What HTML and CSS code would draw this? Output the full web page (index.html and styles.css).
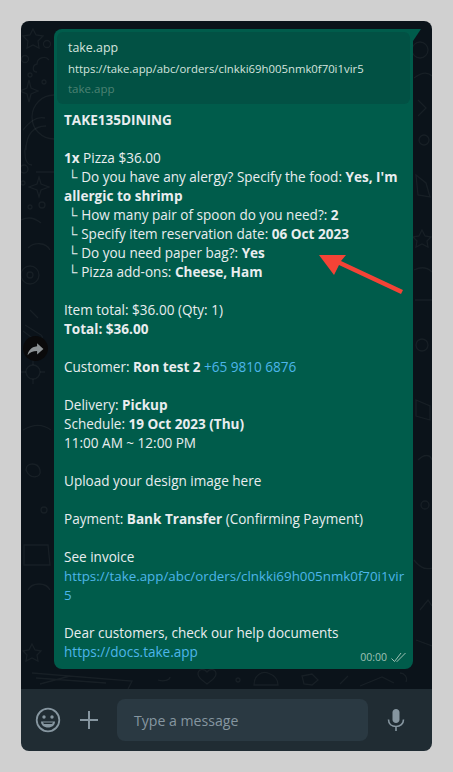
FILE: index.html
```html
<!DOCTYPE html>
<html lang="en">
<head>
    <meta charset="UTF-8">
    <meta name="viewport" content="width=device-width, initial-scale=1.0">
    <title>WhatsApp order message</title>
    <link rel="stylesheet" href="styles.css">
</head>
<body>
    <div class="chat-card">
        <div class="chat-area">
            <svg class="doodles" viewBox="21 21 411 668" fill="none" stroke="#fff" stroke-opacity="0.05" stroke-width="1.3">
                <path d="M33 29l3 6 7 1-5 5 1 7-6-3-6 3 1-7-5-5 7-1z"/>
                <circle cx="47" cy="44" r="3.5"/>
                <circle cx="25" cy="59" r="3.5"/>
                <path d="M37 72c-5 0-5-7 0-8 0-6 8-9 12-4"/>
                <circle cx="30" cy="75" r="2"/>
                <circle cx="44" cy="82" r="2"/>
                <path d="M29 80l2 8 7 3-7 3-2 8-2-8-7-3 7-3z"/>
                <circle cx="54" cy="117" r="22"/>
                <path d="M23 130c6-8 14-14 22-12M26 150c0-16 8-24 20-24M32 165c-8 0-8-14-6-20M36 172l18 0"/>
                <circle cx="24" cy="169" r="4"/>
                <circle cx="23" cy="183" r="2"/>
                <path d="M39 177l2 7 8 3-8 3-2 7-2-7-8-3 8-3z"/>
                <circle cx="42" cy="205" r="3"/>
                <circle cx="30" cy="207" r="2"/>
                <path d="M21 220c8-4 14-2 20 3M28 248c6-6 18-6 22 2"/>
                <circle cx="30" cy="275" r="9"/>
                <circle cx="30" cy="275" r="3"/>
                <path d="M30 310l8 8M25 325l16 10c4 3-2 8-6 5l-12-9"/>
                <circle cx="33" cy="372" r="7"/>
                <path d="M33 360v5M33 379v5M21 372h5M40 372h5"/>
                <path d="M23 430c10-6 20-6 28 0M26 470c0-8 12-8 14 0s-10 10-14 0z"/>
                <circle cx="44" cy="510" r="3"/>
                <path d="M24 545h24l2 20h-26zM28 590c4-8 18-8 22 0"/>
                <path d="M32 644l3 6 6 1-4 4 1 6-6-3-6 3 1-6-4-4 6-1z"/>
                <path d="M32 673l100 8-4 8M40 684l30-8M36 678l70 5"/>
                <path d="M158 680c6 2 12 0 12-3M207 684c-5-4-9-6-9-10 0-5 6-6 9-2 3-4 9-3 9 2 0 4-4 6-9 10z"/>
                <circle cx="238" cy="680" r="2"/>
                <path d="M254 685c0-10 8-14 14-12s10 6 10 12zM302 676l10-2 6 6-6 5-8-1zM340 684l8-8M360 686l22-9 12 6M400 673c4 0 8 4 6 9"/>
                <circle cx="420" cy="50" r="8"/>
                <path d="M414 78c8-6 14-6 18-2M418 100l8 8-8 8"/>
                <circle cx="424" cy="140" r="5"/>
                <path d="M416 175l10 8 4 14-12-2zM422 230l3 6 6 1-4 4 1 6-6-3-6 3 1-6-4-4 6-1z"/>
                <path d="M414 270c8-4 14-2 18 2M415 300h17"/>
                <circle cx="422" cy="345" r="6"/>
                <path d="M416 400l14 6v14l-14-4zM418 460c6-6 12-6 14 0"/>
                <circle cx="425" cy="505" r="4"/>
                <path d="M414 560c6 8 12 10 18 8M420 610l8-10 4 6M416 640l16 6"/>
            </svg>

            <button class="forward-btn" type="button" aria-label="Forward">
                <svg viewBox="0 0 24 24" width="19" height="19"><path fill="#8e9396" d="M14 5.5l8 7-8 7v-4.2c-5.500 0-9 1.600-12 5.200 1-5.500 4-10.300 12-11.300z"/></svg>
            </button>

            <div class="bubble">
                <svg class="bubble-tail" viewBox="0 0 8 12" width="8" height="12"><path fill="#005c4b" d="M0 0h8L0 12z"/></svg>

                <div class="link-preview">
                    <div class="preview-title">take.app</div>
                    <div class="preview-url">https://take.app/abc/orders/clnkki69h005nmk0f70i1vir5</div>
                    <div class="preview-site">take.app</div>
                </div>

                <div class="message">
                    <p><b>TAKE135DINING</b></p>

                    <p><b>1x</b> Pizza $36.00<br>
                    <span class="branch">&nbsp;&nbsp;└</span> Do you have any alergy? Specify the food: <b>Yes, I'm</b><br>
                    <b>allergic to shrimp</b><br>
                    <span class="branch">&nbsp;&nbsp;└</span> How many pair of spoon do you need?: <b>2</b><br>
                    <span class="branch">&nbsp;&nbsp;└</span> Specify item reservation date: <b>06 Oct 2023</b><br>
                    <span class="branch">&nbsp;&nbsp;└</span> Do you need paper bag?: <b>Yes</b><br>
                    <span class="branch">&nbsp;&nbsp;└</span> Pizza add-ons: <b>Cheese, Ham</b></p>

                    <p>Item total: $36.00 (Qty: 1)<br>
                    <b>Total: $36.00</b></p>

                    <p>Customer: <b>Ron test 2</b> <a href="#">+65 9810 6876</a></p>

                    <p>Delivery: <b>Pickup</b><br>
                    Schedule: <b>19 Oct 2023 (Thu)</b><br>
                    11:00 AM ~ 12:00 PM</p>

                    <p>Upload your design image here</p>

                    <p>Payment: <b>Bank Transfer</b> (Confirming Payment)</p>

                    <p>See invoice<br>
                    <a class="long-link" href="#">https://take.app/abc/orders/clnkki69h005nmk0f70i1vir</a><br>
                    <a class="long-link" href="#">5</a></p>

                    <p>Dear customers, check our help documents<br>
                    <a href="#">https://docs.take.app</a></p>
                </div>

                <div class="msg-meta">
                    <span>00:00</span>
                    <svg viewBox="0 0 16 11" width="16" height="11" fill="none" stroke="#9fc1b5" stroke-width="1"><path d="M0.500 6.500l3 3L10 1M6 9.500L14.500 1M5.500 9l.5.500"/></svg>
                </div>
            </div>

            <svg class="red-arrow" viewBox="0 0 86 40" width="86" height="40">
                <path fill="#f44336" d="M0 0h27l-5 6 62 29-2 4-62-29-5 10z"/>
            </svg>
        </div>

        <div class="composer">
            <svg class="icon-emoji" viewBox="0 0 26 26" width="26" height="26" fill="none" stroke="#8696a0" stroke-width="1.800">
                <circle cx="13" cy="13" r="11.300"/>
                <circle cx="9" cy="10" r="1.700" fill="#8696a0" stroke="none"/>
                <circle cx="17" cy="10" r="1.700" fill="#8696a0" stroke="none"/>
                <path fill="#8696a0" stroke="none" d="M6 14.500h14c0 3.800-3 6-7 6s-7-2.200-7-6z"/>
                <path fill="#202c33" stroke="none" d="M8 15.500h10c-.4 1-1.200 1.500-2 1.500h-6c-.8 0-1.600-.5-2-1.500z"/>
            </svg>
            <svg class="icon-plus" viewBox="0 0 18 18" width="18" height="18"><path fill="#8696a0" d="M8 0h2v8h8v2h-8v8H8v-8H0V8h8z"/></svg>
            <div class="msg-input">Type a message</div>
            <svg class="icon-mic" viewBox="0 0 18 24" width="18" height="24">
                <path fill="#8696a0" d="M9 1c2 0 3.500 1.500 3.500 3.500v7c0 2-1.500 3.500-3.500 3.500s-3.500-1.500-3.500-3.500v-7C5.500 2.500 7 1 9 1z"/>
                <path fill="none" stroke="#8696a0" stroke-width="1.600" d="M1.500 11.500c0 4.500 3.300 7 7.500 7s7.500-2.500 7.500-7M9 18.500V23"/>
            </svg>
        </div>
    </div>
</body>
</html>
```

FILE: styles.css
```css
body {
    margin: 0;
    padding: 21px;
    background-color: #d0d0d0;
    font-family: "Open Sans", sans-serif;
}

.chat-card {
    width: 411px;
    height: 730px;
    border-radius: 8px;
    overflow: hidden;
    display: flex;
    flex-direction: column;
}

.chat-area {
    position: relative;
    flex: 1;
    padding: 8px 19px 20px 33px;
    background-color: #0b131a;
}

.doodles {
    position: absolute;
    left: 0;
    top: 0;
    width: 100%;
    height: 100%;
}

.forward-btn {
    position: absolute;
    left: 2px;
    top: 315px;
    width: 25px;
    height: 25px;
    padding: 0;
    border: none;
    border-radius: 50%;
    background-color: #0a0a0b;
    display: flex;
    align-items: center;
    justify-content: center;
}

.bubble {
    position: relative;
    height: 640px;
    box-sizing: border-box;
    padding: 3px;
    background-color: #005c4b;
    border-radius: 0 0 8px 8px;
    border-top-left-radius: 8px;
}

.bubble-tail {
    position: absolute;
    left: 100%;
    top: 0;
}

.link-preview {
    height: 72px;
    box-sizing: border-box;
    padding: 6px 11px;
    background-color: #025144;
    border-radius: 6px;
    color: #d5e4df;
}

.preview-title {
    font-size: 12.400px;
    line-height: 20px;
}

.preview-url {
    font-size: 11.350px;
    line-height: 21px;
}

.preview-site {
    font-size: 11.500px;
    line-height: 20px;
    color: #4d8273;
}

.message {
    padding: 7px 5px 0 7px;
    color: #e9edef;
    font-size: 13.550px;
    line-height: 19px;
    white-space: nowrap;
}

.message p {
    margin: 0 0 19px;
}

.message p:last-child {
    margin-bottom: 0;
}

.message a {
    color: #4db6ea;
    text-decoration: none;
}

.message .long-link {
    font-size: 13.350px;
}

.branch {
    margin-left: -3px;
}

.msg-meta {
    position: absolute;
    right: 6px;
    bottom: 4px;
    display: flex;
    align-items: center;
    gap: 4px;
    font-size: 10.500px;
    line-height: 15px;
    color: #9fc1b5;
}

.red-arrow {
    position: absolute;
    left: 298px;
    top: 234px;
}

.composer {
    height: 62px;
    box-sizing: border-box;
    padding: 10px 0 10px 14px;
    background-color: #202c33;
    display: flex;
    align-items: center;
}

.icon-plus {
    margin-left: 19px;
}

.msg-input {
    width: 251px;
    height: 42px;
    box-sizing: border-box;
    margin-left: 19px;
    padding: 0 17px;
    background-color: #2a3942;
    border-radius: 8px;
    color: #8696a0;
    font-size: 14.100px;
    line-height: 43px;
}

.icon-mic {
    margin-left: 19px;
}
```
